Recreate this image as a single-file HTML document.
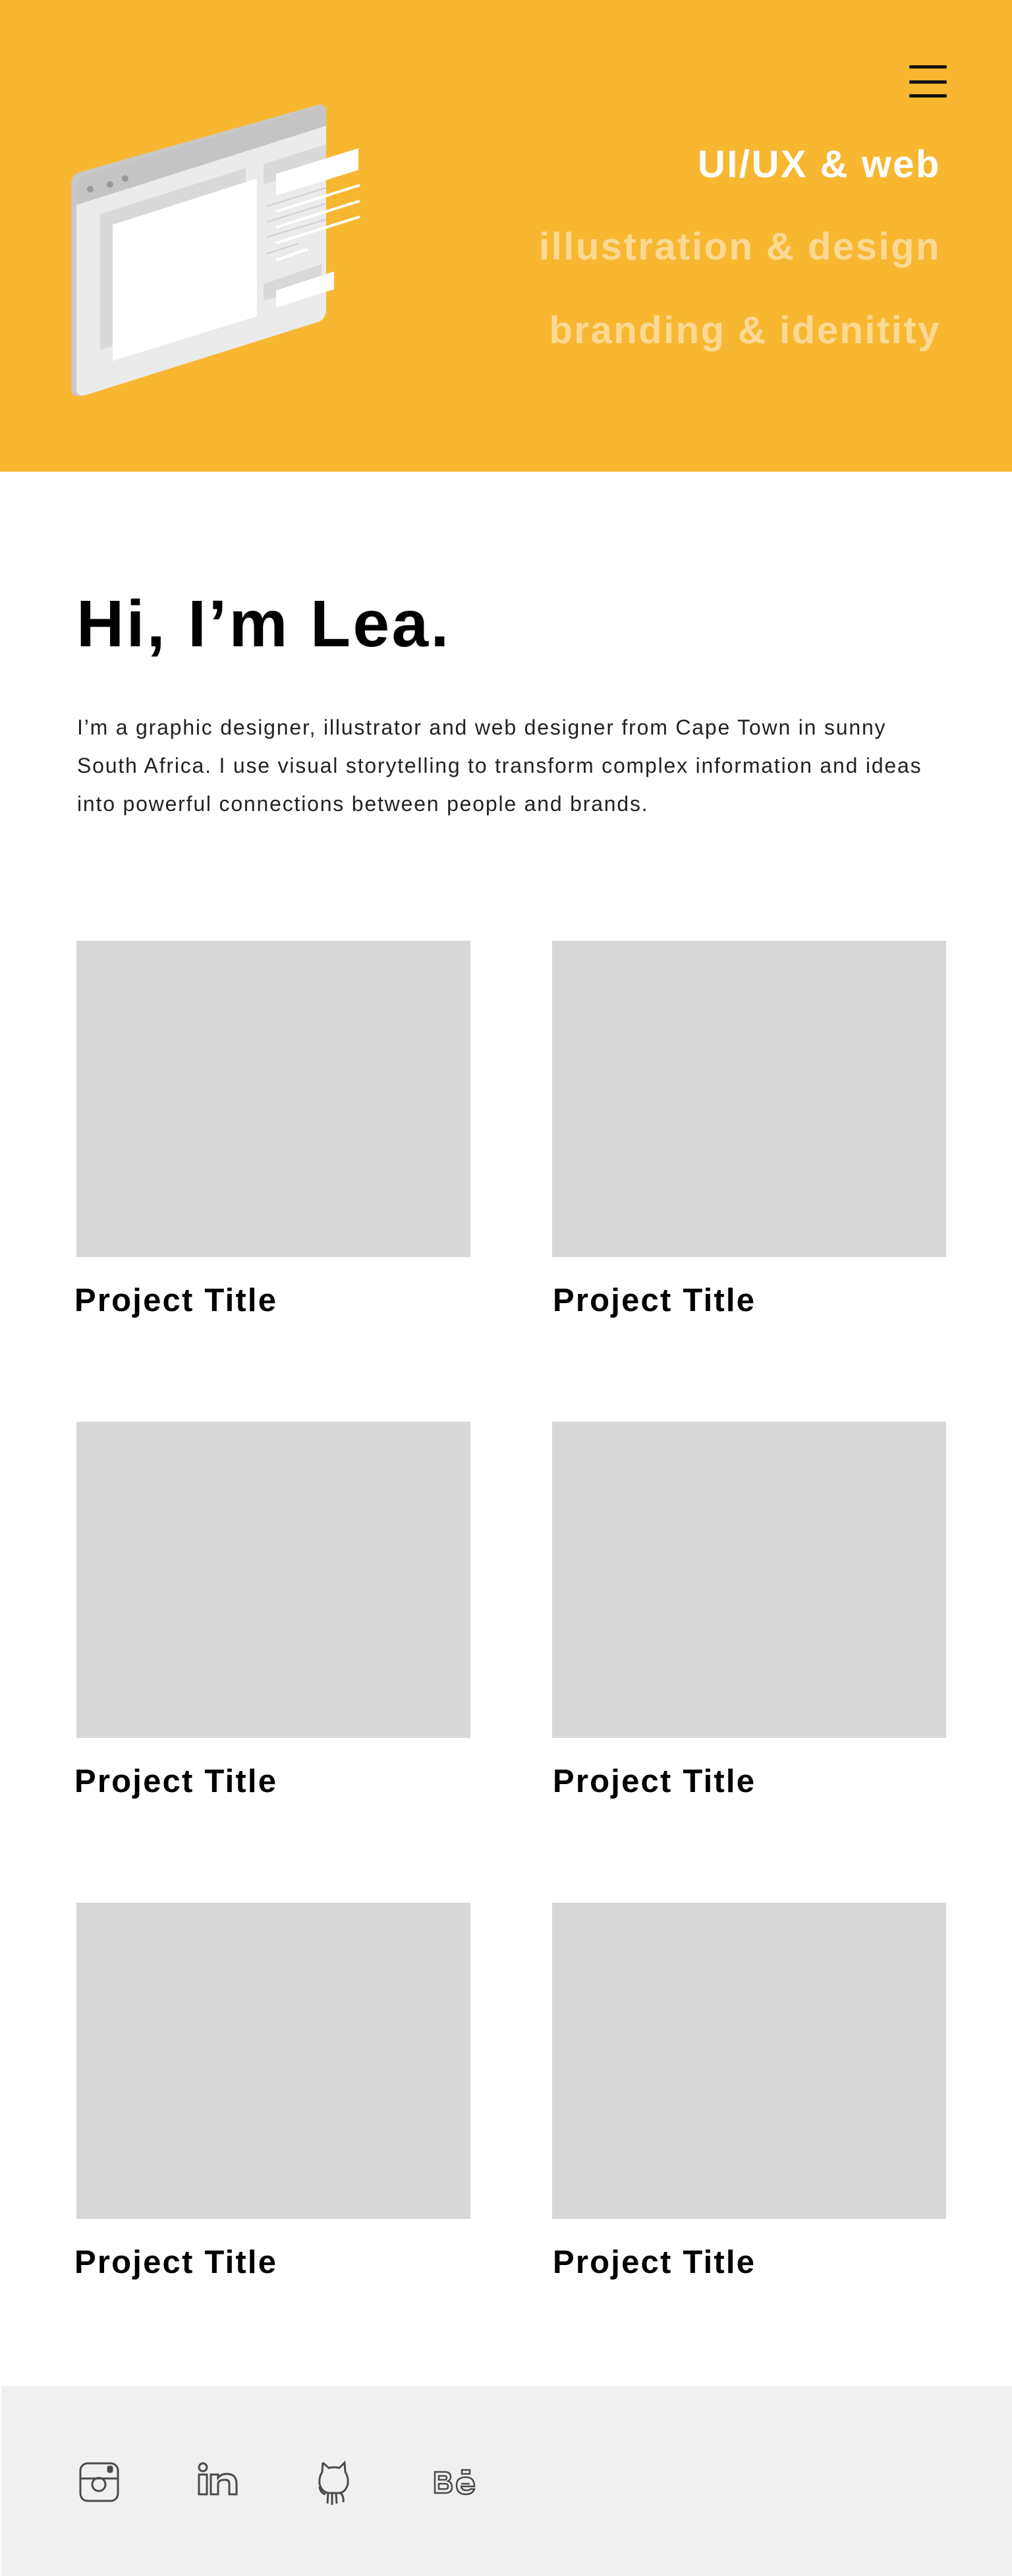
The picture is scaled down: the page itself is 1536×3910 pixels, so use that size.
<!DOCTYPE html>
<html><head><meta charset="utf-8">
<style>
*{margin:0;padding:0;box-sizing:border-box}
html,body{width:1536px;height:3910px;background:#fff;font-family:"Liberation Sans",sans-serif;overflow:hidden;position:relative}
.hdr{position:absolute;left:0;top:0;width:1536px;height:716px;background:#f8b731}
.ham{position:absolute;left:1380px;width:57px;height:5px;background:#111;border-radius:2px}
.tag{position:absolute;right:108px;font-size:58px;font-weight:bold;letter-spacing:2.5px;white-space:nowrap;line-height:1}
.h1{position:absolute;left:116px;top:897px;font-size:100px;font-weight:bold;letter-spacing:3.4px;line-height:1;color:#000}
.p{position:absolute;left:117px;top:1075px;font-size:32px;line-height:58px;color:#222;letter-spacing:1.8px;white-space:nowrap}
.card{position:absolute;width:598px;height:480px;background:#d8d8d8}
.t{position:absolute;font-size:49px;font-weight:bold;color:#000;line-height:1;letter-spacing:2.2px}
.foot{position:absolute;left:2px;top:3622px;width:1534px;height:288px;background:#f0f0f0}
</style></head><body>
<div class="hdr">
<div class="ham" style="top:99px"></div>
<div class="ham" style="top:122px"></div>
<div class="ham" style="top:143px"></div>
<div class="tag" style="top:221px;color:#fff">UI/UX &amp; web</div>
<div class="tag" style="top:346px;color:#fbd995">illustration &amp; design</div>
<div class="tag" style="top:473px;color:#fbd995">branding &amp; idenitity</div>
<svg width="1536" height="716" style="position:absolute;left:0;top:0">
<path d="M108 278 Q108 268 118 262 L480 160 Q495 155 495 170 L495 470 Q495 482 485 488 L128 600 Q108 605 108 590 Z" fill="#c8c8c8"/>
<path d="M116 282 Q116 272 126 266 L480 162 Q495 157 495 172 L495 470 Q495 482 485 488 L132 599 Q116 604 116 590 Z" fill="#ebebeb"/>
<path d="M116 282 Q116 272 126 266 L480 162 Q495 157 495 172 L495 191 L116 311 Z" fill="#c4c4c4"/>
<circle cx="137" cy="287" r="5" fill="#999"/><circle cx="167" cy="280" r="5" fill="#999"/><circle cx="190" cy="271" r="5" fill="#999"/>
<polygon points="152,325 373,255 373,466 152,531" fill="#d9d9d9"/>
<polygon points="171,341 390,271 390,480 171,548" fill="#fff"/>
<polygon points="400,249 495,219 495,250 400,280" fill="#d9d9d9"/>
<polygon points="400,431 488,401 488,428 400,457" fill="#d9d9d9"/>
<polygon points="419,264 544,225 544,258 419,297" fill="#fff"/>
<g stroke="#d0d0d0" stroke-width="2"><line x1="405" y1="313" x2="495" y2="285"/><line x1="405" y1="337" x2="495" y2="309"/><line x1="405" y1="360" x2="495" y2="333"/><line x1="405" y1="385" x2="452" y2="370"/></g>
<g stroke="#fff" stroke-width="4"><line x1="419" y1="321" x2="546" y2="281"/><line x1="419" y1="345" x2="546" y2="305"/><line x1="419" y1="369" x2="546" y2="329"/><line x1="419" y1="395" x2="467" y2="378"/></g>
<polygon points="419,441 507,412 507,439 419,467" fill="#fff"/>
</svg>
</div>
<div class="h1">Hi, I’m Lea.</div>
<div class="p">I’m a graphic designer, illustrator and web designer from Cape Town in sunny<br>South Africa. I use visual storytelling to transform complex information and ideas<br>into powerful connections between people and brands.</div>

<div class="card" style="left:116px;top:1428px"></div><div class="card" style="left:838px;top:1428px"></div>
<div class="t" style="left:113px;top:1950px">Project Title</div><div class="t" style="left:839px;top:1950px">Project Title</div>
<div class="card" style="left:116px;top:2158px"></div><div class="card" style="left:838px;top:2158px"></div>
<div class="t" style="left:113px;top:2680px">Project Title</div><div class="t" style="left:839px;top:2680px">Project Title</div>
<div class="card" style="left:116px;top:2888px"></div><div class="card" style="left:838px;top:2888px"></div>
<div class="t" style="left:113px;top:3410px">Project Title</div><div class="t" style="left:839px;top:3410px">Project Title</div>

<div class="foot"></div>
<svg width="1536" height="3910" style="position:absolute;left:0;top:0" fill="none" stroke="#4a4a4a" stroke-width="3">
<rect x="122" y="3739" width="57" height="57" rx="11"/>
<line x1="122" y1="3762" x2="179" y2="3762"/>
<circle cx="150" cy="3771" r="10"/>
<rect x="164" y="3744" width="6" height="8" rx="2" fill="#4a4a4a"/>
<circle cx="308" cy="3745" r="6"/>
<rect x="302" y="3756" width="12" height="30"/>
<path d="M320 3786 V3756 H331 V3761 Q336 3755 344 3755 Q359 3755 359 3770 V3786 H348 V3770 Q348 3764 342 3764 Q331 3764 331 3770 V3786 Z"/>
<path d="M490 3738 L489 3752 Q484 3760 485 3770 Q488 3782 498 3784 L497 3800 M494 3786 Q486 3784 485 3774 M504 3785 L504 3802 M510 3785 L511 3800 M516 3784 Q522 3787 521 3798 M490 3738 L499 3746 Q507 3744 515 3746 L523 3738 L524 3752 Q529 3760 528 3770 Q525 3782 516 3784 L498 3784"/>
<path d="M660 3752 H675 Q684 3752 684 3760 Q684 3764 680 3766 Q686 3768 686 3775 Q686 3784 676 3784 H660 Z M666 3758 V3764 H675 Q678 3764 678 3761 Q678 3758 675 3758 Z M666 3770 V3778 H676 Q680 3778 680 3774 Q680 3770 676 3770 Z" stroke-width="2.5"/>
<rect x="701" y="3749" width="12" height="6" stroke-width="2.5"/>
<path d="M693 3772 Q693 3760 707 3760 Q720 3760 720 3774 H700 Q701 3780 708 3780 Q713 3780 714 3778 H720 Q717 3786 707 3786 Q693 3786 693 3772 Z M700 3770 H713" stroke-width="2.5"/>
</svg>
</body></html>
